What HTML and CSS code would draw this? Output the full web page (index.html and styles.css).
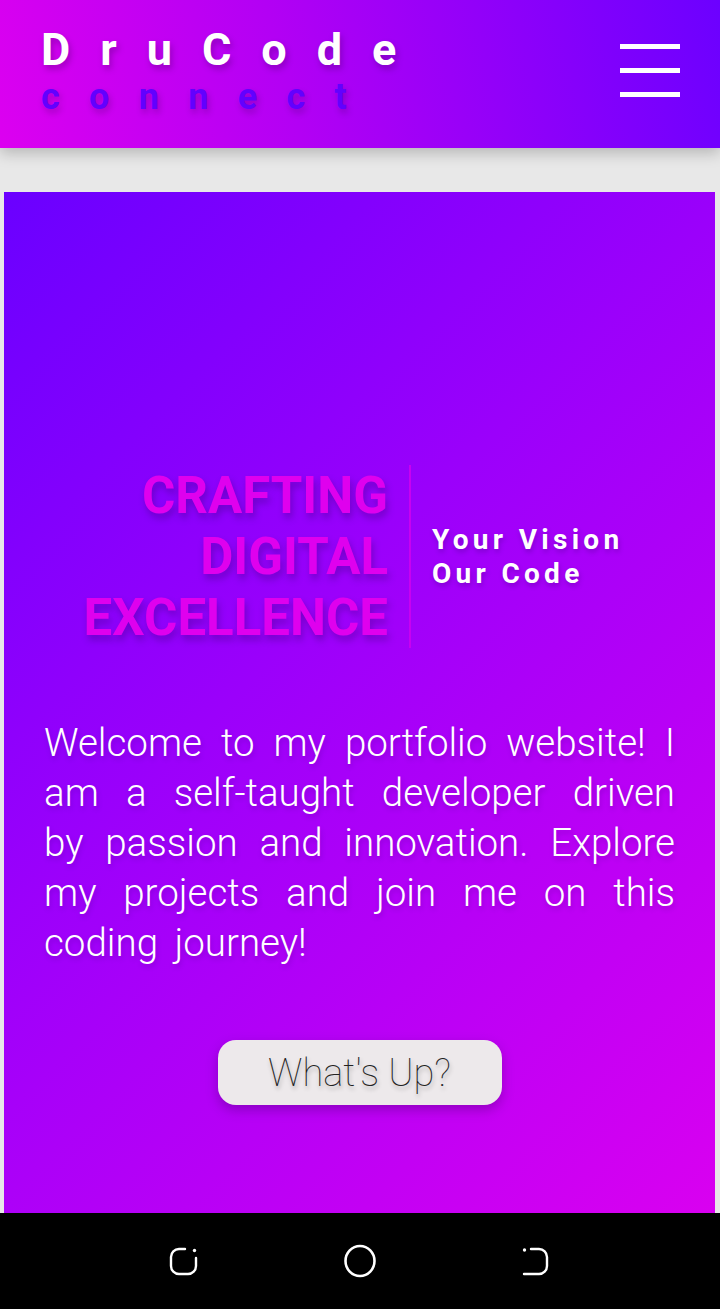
FILE: index.html
```html
<!DOCTYPE html>
<html lang="en">
<head>
<meta charset="utf-8">
<title>DruCode connect</title>
<link rel="stylesheet" href="styles.css">
</head>
<body>
<header class="topbar">
  <div class="brand">
    <div class="brand-name">DruCode</div>
    <div class="brand-sub">connect</div>
  </div>
  <button class="menu" aria-label="Menu">
    <span class="menu-bar"></span>
    <span class="menu-bar"></span>
    <span class="menu-bar"></span>
  </button>
</header>

<main class="hero">
  <div class="hero-head">
    <h1 class="hero-title">CRAFTING<br>DIGITAL<br>EXCELLENCE</h1>
    <p class="hero-tag">Your Vision<br>Our Code</p>
  </div>
  <p class="hero-text">Welcome to my portfolio website! I am a self-taught developer driven by passion and innovation. Explore my projects and join me on this coding journey!</p>
  <div class="hero-actions">
    <button class="cta">What's Up?</button>
  </div>
</main>

<nav class="sysnav">
  <svg class="sysnav-icon" width="32" height="32" viewBox="0 0 32 32" aria-hidden="true">
    <path d="M17 4 H11 A8 8 0 0 0 3 12 V21 A8 8 0 0 0 11 29 H20 A8 8 0 0 0 28 21 V13" fill="none" stroke="#fff" stroke-width="2.4" stroke-linecap="round"/>
    <circle cx="26.5" cy="5.5" r="1.7" fill="#fff"/>
  </svg>
  <svg class="sysnav-icon" width="34" height="34" viewBox="0 0 34 34" aria-hidden="true">
    <ellipse cx="17" cy="17" rx="14.5" ry="15" fill="none" stroke="#fff" stroke-width="2.6"/>
  </svg>
  <svg class="sysnav-icon" width="32" height="32" viewBox="0 0 32 32" aria-hidden="true">
    <path d="M11 4 H19 A8 8 0 0 1 27 12 V21 A8 8 0 0 1 19 29 H4" fill="none" stroke="#fff" stroke-width="2.4" stroke-linecap="round"/>
    <circle cx="4.5" cy="5" r="1.7" fill="#fff"/>
  </svg>
</nav>
</body>
</html>
```

FILE: styles.css
```css
* { box-sizing: border-box; }

html, body {
  margin: 0;
  padding: 0;
}

body {
  background: #e8e8e8;
  font-family: Roboto, "Liberation Sans", sans-serif;
  overflow: hidden;
}

.topbar {
  height: 148px;
  padding: 27px 40px 0 41px;
  display: flex;
  justify-content: space-between;
  align-items: flex-start;
  background: linear-gradient(75deg, #dc00f0 0%, #b300f4 40%, #6c00ff 100%);
  box-shadow: 0 5px 14px rgba(0, 0, 0, 0.22);
  position: relative;
  z-index: 1;
}

.brand-name {
  font-size: 45px;
  line-height: 45px;
  font-weight: 700;
  color: #fff;
  letter-spacing: 30px;
  text-shadow: 2px 4px 6px rgba(60, 0, 90, 0.35);
}

.brand-sub {
  margin-top: 7px;
  font-size: 36px;
  line-height: 36px;
  font-weight: 700;
  color: #6200ff;
  letter-spacing: 29.3px;
  text-shadow: 2px 4px 6px rgba(60, 0, 90, 0.3);
}

.menu {
  margin-top: 17px;
  width: 60px;
  padding: 0;
  border: 0;
  background: none;
  display: flex;
  flex-direction: column;
  gap: 19px;
}

.menu-bar {
  display: block;
  height: 5px;
  background: #fff;
}

.hero {
  margin: 44px 5px 0 4px;
  height: 1033px;
  padding: 273px 40px 0;
  background: linear-gradient(135deg, #6a00ff 0%, #9b00fb 42%, #da00f0 100%);
  color: #fff;
}

.hero-head {
  display: flex;
  align-items: center;
}

.hero-title {
  margin: 0;
  width: 367px;
  padding-right: 21px;
  border-right: 2px solid #c800f2;
  text-align: right;
  font-size: 51px;
  line-height: 61px;
  font-weight: 700;
  color: #df00ee;
  text-shadow: 2px 5px 7px rgba(50, 0, 110, 0.35);
}

.hero-tag {
  margin: 0;
  padding-left: 21px;
  font-size: 28px;
  line-height: 34px;
  font-weight: 700;
  letter-spacing: 4.3px;
  color: #fff;
  text-shadow: 1px 3px 5px rgba(50, 0, 110, 0.3);
}

.hero-text {
  margin: 70px 0 0;
  font-size: 38.5px;
  line-height: 50px;
  font-weight: 300;
  word-spacing: 7px;
  text-align: justify;
  color: #fff;
  text-shadow: 1px 3px 5px rgba(50, 0, 110, 0.25);
}

.hero-actions {
  margin-top: 72px;
  display: flex;
  justify-content: center;
}

.cta {
  width: 284px;
  height: 65px;
  border: 0;
  border-radius: 18px;
  background: #ede9eb;
  box-shadow: 0 5px 12px rgba(60, 0, 100, 0.35);
  font-family: Roboto, "Liberation Sans", sans-serif;
  font-size: 38px;
  font-weight: 100;
  color: #222;
  text-shadow: 1px 3px 4px rgba(0, 0, 0, 0.3);
  padding: 0;
}

.sysnav {
  position: fixed;
  left: 0;
  right: 0;
  bottom: 0;
  height: 96px;
  background: #000;
  display: flex;
  justify-content: center;
  align-items: center;
  gap: 143px;
  z-index: 2;
}

.sysnav-icon {
  display: block;
}
```
